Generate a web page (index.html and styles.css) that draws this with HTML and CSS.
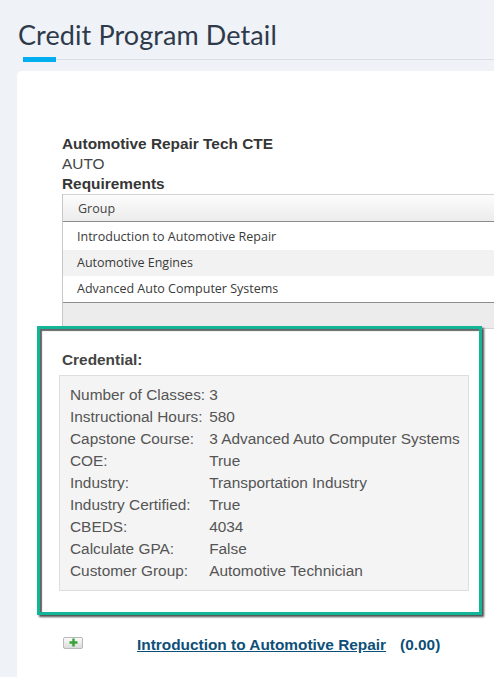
FILE: index.html
```html
<!DOCTYPE html>
<html>
<head>
<meta charset="utf-8">
<link rel="stylesheet" href="styles.css">
</head>
<body>
<h1 class="page-title">Credit Program Detail</h1>
<div class="tabbar"><div class="tab-active"></div><div class="tab-line"></div></div>
<div class="card">
  <div class="prog-name">Automotive Repair Tech CTE</div>
  <div class="prog-code">AUTO</div>
  <div class="prog-req">Requirements</div>
  <div class="grid">
    <div class="grid-head">Group</div>
    <div class="grid-row first">Introduction to Automotive Repair</div>
    <div class="grid-row alt">Automotive Engines</div>
    <div class="grid-row">Advanced Auto Computer Systems</div>
    <div class="grid-foot"></div>
  </div>
  <div class="highlight">
    <div class="cred-title">Credential:</div>
    <div class="cred-box">
      <div class="cred-label">Number of Classes:</div><div class="cred-value">3</div>
      <div class="cred-label">Instructional Hours:</div><div class="cred-value">580</div>
      <div class="cred-label">Capstone Course:</div><div class="cred-value">3 Advanced Auto Computer Systems</div>
      <div class="cred-label">COE:</div><div class="cred-value">True</div>
      <div class="cred-label">Industry:</div><div class="cred-value">Transportation Industry</div>
      <div class="cred-label">Industry Certified:</div><div class="cred-value">True</div>
      <div class="cred-label">CBEDS:</div><div class="cred-value">4034</div>
      <div class="cred-label">Calculate GPA:</div><div class="cred-value">False</div>
      <div class="cred-label">Customer Group:</div><div class="cred-value">Automotive Technician</div>
    </div>
  </div>
  <div class="course-row">
    <span class="plus-btn"><svg width="9" height="9" viewBox="0 0 9 9"><path d="M3.3 0.5h2.4v2.8h2.8v2.4h-2.8v2.8h-2.4v-2.8h-2.8v-2.4h2.8z" fill="#3aa335"/></svg></span>
    <a class="course-link" href="#">Introduction to Automotive Repair</a>
    <span class="course-units">(0.00)</span>
  </div>
</div>
</body>
</html>
```
FILE: styles.css
```css
html, body {
  margin: 0;
  padding: 0;
}
body {
  background: #eff2f7;
  overflow: hidden;
  width: 494px;
  height: 677px;
}
.page-title {
  margin: 0;
  padding: 18px 0 0 18px;
  font-family: Lato, "Open Sans", sans-serif;
  font-weight: 400;
  font-size: 27px;
  line-height: 34px;
  color: #2e3a4b;
  letter-spacing: 0.1px;
}
.tabbar {
  display: flex;
  align-items: center;
  margin: 5px 0 0 23px;
  height: 5px;
}
.tab-active {
  width: 33px;
  height: 5px;
  background: #00aeef;
}
.tab-line {
  flex: 1;
  height: 1px;
  background: #d9dde4;
}
.card {
  margin: 9px 0 0 17px;
  width: 540px;
  height: 620px;
  background: #fff;
  border-radius: 5px 0 0 0;
  padding: 63px 0 0 45px;
  box-sizing: border-box;
  font-family: "Liberation Sans", Arial, sans-serif;
  color: #333;
}
.prog-name, .prog-req {
  font-weight: bold;
  font-size: 15.4px;
  line-height: 20px;
  color: #363636;
}
.prog-code {
  font-size: 15.4px;
  line-height: 20px;
  color: #444;
}
.grid {
  width: 470px;
  border-left: 1px solid #c8c8c8;
  font-family: "Open Sans", sans-serif;
  font-size: 12.5px;
  color: #3a3a3a;
}
.grid-head {
  height: 26px;
  line-height: 28px;
  padding-left: 15px;
  border-top: 1px solid #d4d4d4;
  border-bottom: 1px solid #8c8c8c;
  background: linear-gradient(#fcfcfc, #ececec);
  color: #444;
}
.grid-row {
  height: 26px;
  line-height: 26px;
  padding-left: 14px;
  background: #fff;
}
.grid-row.first {
  height: 28px;
  line-height: 30px;
}
.grid-row.alt {
  background: #f2f2f2;
}
.grid-foot {
  height: 25px;
  border-top: 1px solid #8c8c8c;
  border-bottom: 1px solid #d4d4d4;
  background: #ececec;
}
.highlight {
  position: relative;
  margin: -3px 0 0 -25px;
  width: 445px;
  box-sizing: border-box;
  border: 3px solid #12b596;
  background: #fff;
  padding: 21px 10px 21px 19px;
  box-shadow: 2px 2px 2px rgba(0,0,0,0.7), inset 2px 2px 1px rgba(0,0,0,0.6);
}
.cred-title {
  font-weight: bold;
  font-size: 15.4px;
  line-height: 20px;
  color: #444;
  padding-left: 3px;
  margin-bottom: 5px;
}
.cred-box {
  display: grid;
  grid-template-columns: auto 1fr;
  column-gap: 4px;
  background: #f4f4f4;
  border: 1px solid #dedede;
  padding: 8px 2px 8px 10px;
  font-size: 15.4px;
  line-height: 22px;
  color: #555;
  white-space: nowrap;
}
.course-row {
  display: flex;
  align-items: center;
  margin: 20px 0 0 1px;
  height: 20px;
}
.plus-btn {
  display: flex;
  align-items: center;
  justify-content: center;
  width: 18px;
  height: 10px;
  border: 1px solid #b9b9b9;
  border-radius: 2px;
  background: linear-gradient(#fafafa, #dcdcdc);
  margin-top: -5px;
}
.course-link {
  margin-left: 54px;
  font-weight: bold;
  font-size: 15.4px;
  color: #0d4f78;
  text-decoration: underline;
}
.course-units {
  margin-left: 14px;
  font-weight: bold;
  font-size: 15.4px;
  color: #0d4f78;
}
```
